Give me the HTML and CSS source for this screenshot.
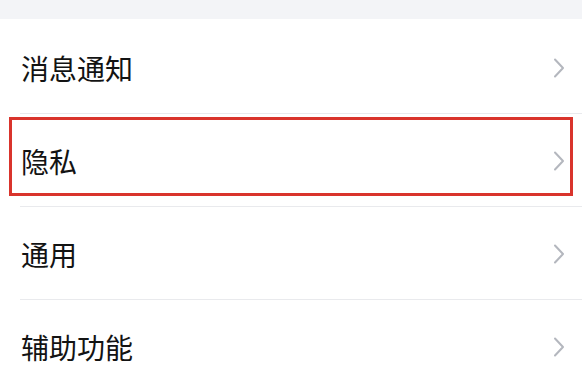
FILE: index.html
```html
<!DOCTYPE html>
<html lang="zh-CN">
<head>
<meta charset="utf-8">
<link rel="stylesheet" href="styles.css">
</head>
<body>
<div class="top-band"></div>
<div class="list">
  <div class="row first">
    <span class="label">消息通知</span>
    <svg class="chev" width="12" height="20" viewBox="0 0 12 20"><polyline points="2,1.5 10,10 2,18.5" /></svg>
  </div>
  <div class="row">
    <span class="label">隐私</span>
    <svg class="chev" width="12" height="20" viewBox="0 0 12 20"><polyline points="2,1.5 10,10 2,18.5" /></svg>
    <div class="mark"></div>
  </div>
  <div class="row">
    <span class="label">通用</span>
    <svg class="chev" width="12" height="20" viewBox="0 0 12 20"><polyline points="2,1.5 10,10 2,18.5" /></svg>
  </div>
  <div class="row">
    <span class="label">辅助功能</span>
    <svg class="chev" width="12" height="20" viewBox="0 0 12 20"><polyline points="2,1.5 10,10 2,18.5" /></svg>
  </div>
</div>
</body>
</html>
```
FILE: styles.css
```css
html, body {
  margin: 0;
  padding: 0;
  background: #ffffff;
}
body {
  width: 582px;
  height: 386px;
  overflow: hidden;
  font-family: "Noto Sans CJK SC", "Noto Sans", sans-serif;
}
.top-band {
  height: 19px;
  background: #f3f4f7;
}
.list {
  display: flex;
  flex-direction: column;
}
.row {
  position: relative;
  height: 93px;
  margin-left: 20px;
  padding: 1px 17px 0 1px;
  box-sizing: border-box;
  display: flex;
  align-items: center;
  justify-content: space-between;
  border-bottom: 1px solid #e9eaed;
}
.row.first {
  height: 95px;
  padding-top: 3px;
}
.label {
  font-size: 28px;
  color: #131313;
  line-height: 1;
}
.chev {
  display: block;
  fill: none;
  stroke: #b4b7be;
  stroke-width: 2;
  stroke-linecap: round;
  stroke-linejoin: round;
}
.mark {
  position: absolute;
  left: -11px;
  top: 3px;
  width: 564px;
  height: 79px;
  box-sizing: border-box;
  border: 3px solid #d9342c;
}
```
